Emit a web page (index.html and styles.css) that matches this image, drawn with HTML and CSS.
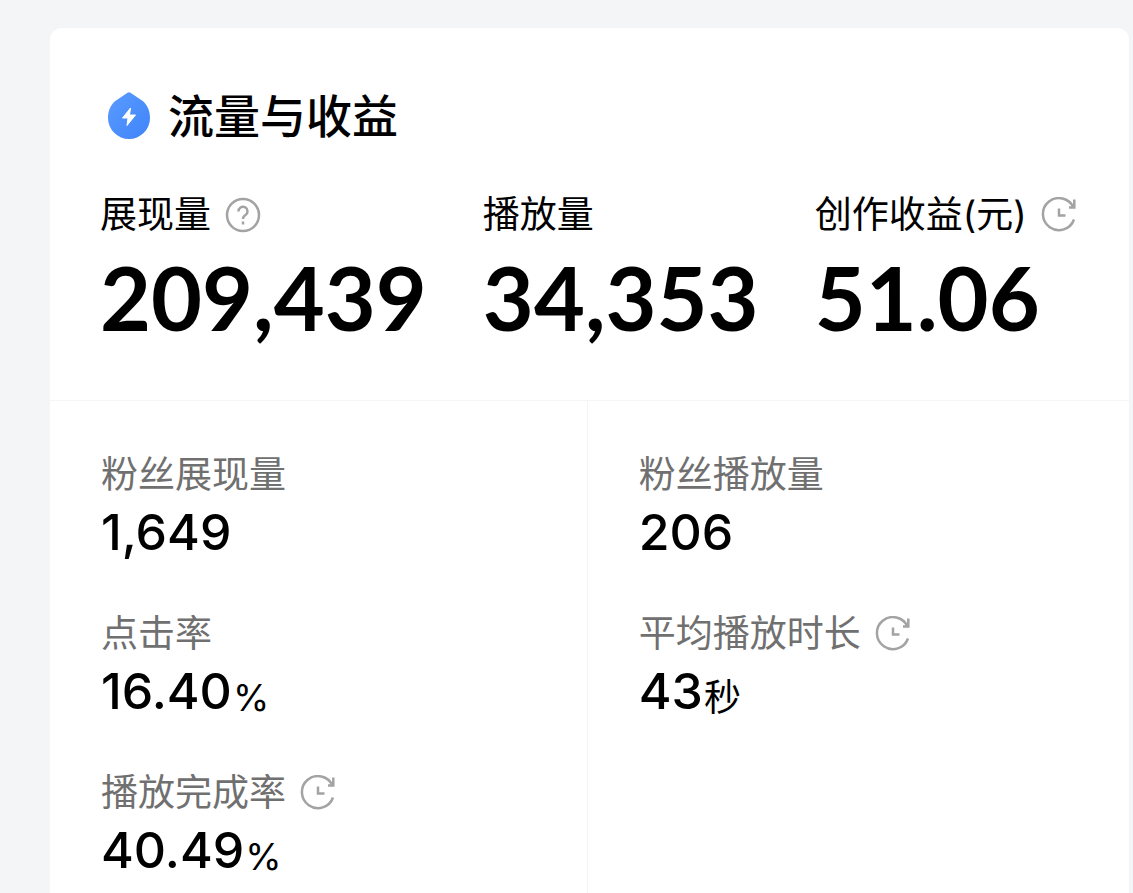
FILE: index.html
```html
<!DOCTYPE html>
<html lang="zh-CN">
<head>
<meta charset="utf-8">
<meta name="viewport" content="width=device-width, initial-scale=1">
<title>流量与收益</title>
<link rel="stylesheet" href="styles.css">
</head>
<body>
<svg class="defs" aria-hidden="true">
  <symbol id="clock" viewBox="0 0 36 36">
    <path d="M28 10.500H33.300V2.500M32.500 10.500A16 16 0 1 0 33 22.500M18 11.500V18.500H24.500"/>
  </symbol>
</svg>
<main class="card">
  <header class="title">
    <svg class="drop" viewBox="0 0 42 48" aria-hidden="true">
      <defs><linearGradient id="blue" x1="0" y1="0" x2="1" y2="1"><stop offset="0" stop-color="#5b9cff"/><stop offset="1" stop-color="#3e83fa"/></linearGradient></defs>
      <path fill="url(#blue)" d="M19.500 .8Q21-.3 22.500 .8L34 8.500C39.500 12.500 42 19 42 26A21 21 0 0 1 0 26C0 19 2.500 12.500 8 8.500Z"/>
      <path fill="#fff" stroke="#fff" stroke-linejoin="round" d="M22.500 16L14.500 26H20L19 33.500L27.500 23H21.500Z"/>
    </svg>
    <h1>流量与收益</h1>
  </header>
  <section class="summary">
    <div class="total">
      <h2>展现量
        <button class="icon" aria-label="说明"><svg viewBox="0 0 36 36"><circle cx="18" cy="18" r="16"/><path d="M13.500 14.500A4.500 4.500 0 1 1 20.500 18Q18 19.500 18 22M18 24.500V27.500"/></svg></button>
      </h2>
      <p>209,439</p>
    </div>
    <div class="total"><h2>播放量</h2><p>34,353</p></div>
    <div class="total">
      <h2>创作收益(元)
        <button class="icon" aria-label="更新时间"><svg><use href="#clock"/></svg></button>
      </h2>
      <p>51.06</p>
    </div>
  </section>
  <section class="details">
    <div class="column">
      <div class="metric"><h3>粉丝展现量</h3><p>1,649</p></div>
      <div class="metric"><h3>点击率</h3><p>16.40<small>%</small></p></div>
      <div class="metric"><h3>播放完成率 <button class="icon" aria-label="更新时间"><svg><use href="#clock"/></svg></button></h3><p>40.49<small>%</small></p></div>
    </div>
    <div class="column">
      <div class="metric"><h3>粉丝播放量</h3><p>206</p></div>
      <div class="metric"><h3>平均播放时长 <button class="icon" aria-label="更新时间"><svg><use href="#clock"/></svg></button></h3><p>43<small>秒</small></p></div>
    </div>
  </section>
</main>
</body>
</html>
```
FILE: styles.css
```css
* { box-sizing: border-box; }
body { margin: 0; padding: 28px 4px 0 50px; background: #f4f5f7; color: #000; font-family: Inter, "Noto Sans CJK SC", sans-serif; }
h1, h2, h3, p { margin: 0; }
.defs { position: absolute; width: 0; height: 0; }
.card { min-height: calc(100vh - 28px); display: flex; flex-direction: column; background: #fff; border-radius: 12px 12px 0 0; }
.title { display: flex; align-items: center; gap: 18px; padding: 56px 58px 0; }
.title h1 { font-size: 46px; line-height: 64px; font-weight: 500; }
.drop { width: 42px; height: 48px; }
.summary { display: flex; gap: 56px; padding: 41px 50px 51px; border-bottom: 1px solid #f5f5f6; }
.total h2, .metric h3 { display: flex; align-items: center; gap: 14px; font-size: 37px; line-height: 52px; font-weight: 400; white-space: nowrap; }
.total p { margin-top: 4px; font-family: Lato, sans-serif; font-size: 88px; line-height: 104px; font-weight: 700; }
.icon { flex: none; padding: 0; border: 0; background: none; width: 36px; height: 36px; color: #a3a3a3; }
.icon svg { display: block; width: 36px; height: 36px; fill: none; stroke: currentColor; stroke-width: 2.5; }
.details { flex: 1; display: grid; grid-template-columns: 99fr 100fr; }
.column { padding: 48px 51px 0; display: flex; flex-direction: column; gap: 45px; }
.column + .column { border-left: 1px solid #f5f5f6; }
.metric h3 { color: #707070; }
.metric p { display: flex; align-items: flex-end; gap: 1px; font-size: 50px; line-height: 62px; font-weight: 500; }
.metric small { font-size: 37px; line-height: 48px; font-weight: 400; }
```
